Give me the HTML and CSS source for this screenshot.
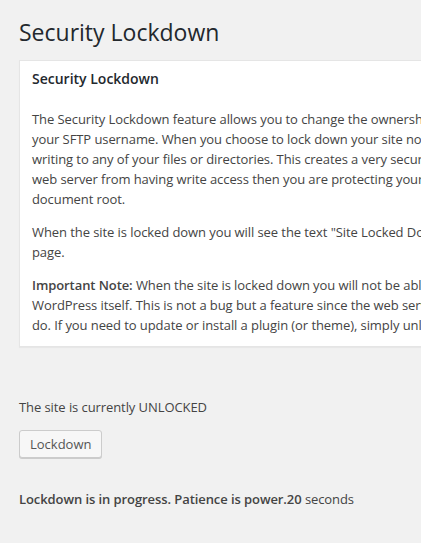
FILE: index.html
```html
<!DOCTYPE html>
<html lang="en">
<head>
<meta charset="utf-8">
<title>Security Lockdown</title>
<link rel="stylesheet" href="styles.css">
</head>
<body>
<div class="wrap">
  <h1 class="page-title">Security Lockdown</h1>
  <div class="postbox">
    <h2 class="hndle">Security Lockdown</h2>
    <div class="inside">
      <p>The Security Lockdown feature allows you to change the ownership of all your files and directories to<br>your SFTP username. When you choose to lock down your site no process running as the web server is capable of<br>writing to any of your files or directories. This creates a very secure environment as by preventing the<br>web server from having write access then you are protecting your site from attackers who gain access to your<br>document root.</p>
      <p>When the site is locked down you will see the text "Site Locked Down" in the admin bar at the top of every admin<br>page.</p>
      <p><strong>Important Note:</strong> When the site is locked down you will not be able to update or install plugins or themes from within<br>WordPress itself. This is not a bug but a feature since the web server does not have the permissions it needs to<br>do. If you need to update or install a plugin (or theme), simply unlock the site, make your changes and lock it again.</p>
    </div>
  </div>
  <p class="status">The site is currently UNLOCKED</p>
  <p class="actions"><button class="button" type="button">Lockdown</button></p>
  <p class="progress"><strong>Lockdown is in progress. Patience is power.</strong><strong>20</strong> seconds</p>
</div>
</body>
</html>
```

FILE: styles.css
```css
html {
  background: #f1f1f1;
  overflow: hidden;
}
body {
  margin: 0;
  background: #f1f1f1;
  color: #444;
  font-family: "Open Sans", "Liberation Sans", sans-serif;
  font-size: 13px;
  line-height: 1.4em;
}
.wrap {
  padding: 18px 0 0 19px;
  width: 900px;
}
.page-title {
  margin: 0;
  font-size: 23px;
  font-weight: 400;
  line-height: 29px;
  color: #23282d;
}
.postbox {
  margin-top: 13px;
  background: #fff;
  border: 1px solid #e5e5e5;
  box-shadow: 0 1px 1px rgba(0, 0, 0, 0.04);
}
.hndle {
  margin: 0;
  padding: 8px 12px;
  font-size: 14px;
  line-height: 1.4;
  font-weight: 600;
  color: #23282d;
}
.inside {
  padding: 0 12px 11px;
  letter-spacing: -0.08px;
}
.inside p {
  margin: 13px 0;
  line-height: 20px;
}
.inside p:first-child {
  margin-top: 12px;
}
.inside p:last-child {
  margin-bottom: 0;
}
.inside strong {
  font-weight: 600;
}
.status {
  margin: 50px 0 0;
  line-height: 20px;
  letter-spacing: -0.08px;
}
.actions {
  margin: 13px 0 0;
  line-height: 20px;
}
.button {
  display: inline-block;
  height: 28px;
  margin: 0;
  padding: 0 10px 1px;
  font-family: inherit;
  font-size: 13px;
  line-height: 26px;
  color: #555;
  background: #f7f7f7;
  border: 1px solid #ccc;
  border-radius: 3px;
  box-shadow: 0 1px 0 #ccc;
  vertical-align: top;
  cursor: pointer;
}
.progress {
  margin: 31px 0 0;
  line-height: 20px;
  letter-spacing: -0.08px;
}
.progress strong {
  font-weight: 600;
}
```
